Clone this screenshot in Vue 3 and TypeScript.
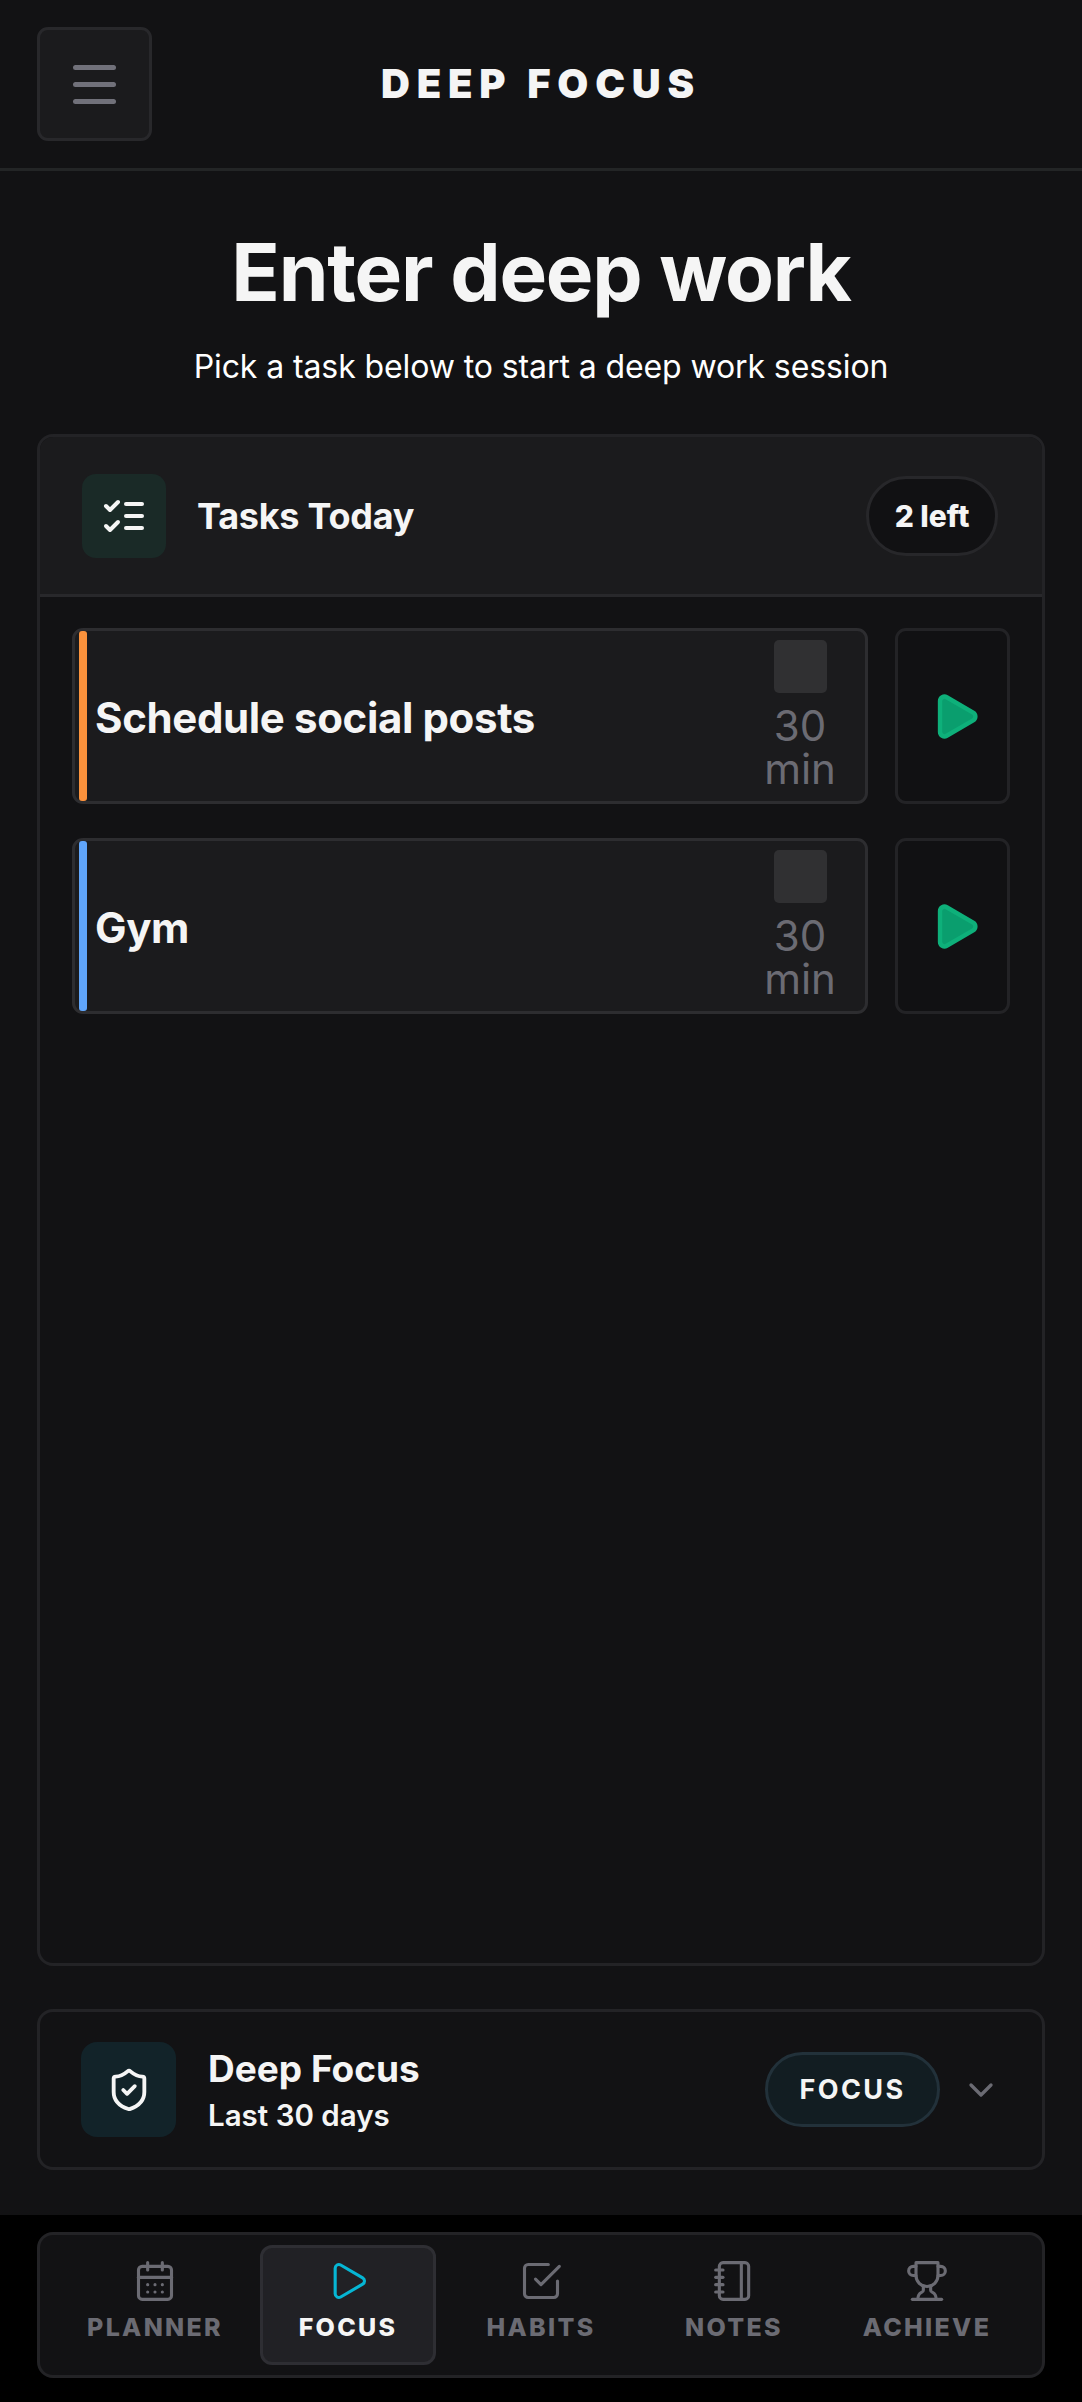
<template>
  <div class="page">
    <header class="topbar">
      <button class="menu-btn" aria-label="Menu">
        <span></span><span></span><span></span>
      </button>
      <div class="brand">DEEP FOCUS</div>
      <div class="spacer"></div>
    </header>

    <main class="content">
      <section class="hero">
        <h1>Enter deep work</h1>
        <p>Pick a task below to start a deep work session</p>
      </section>

      <section class="tasks-card">
        <div class="tasks-head">
          <div class="tasks-icon">
            <svg width="48" height="48" viewBox="0 0 24 24" fill="none" stroke="#f5f5f5" stroke-width="2" stroke-linecap="round" stroke-linejoin="round">
              <path d="m3 17 2 2 4-4" /><path d="m3 7 2 2 4-4" /><path d="M13 6h8" /><path d="M13 12h8" /><path d="M13 18h8" />
            </svg>
          </div>
          <h2>Tasks Today</h2>
          <span class="left-pill">2 left</span>
        </div>
        <div class="task-list">
          <div v-for="task in tasks" :key="task.id" class="task-row">
            <div class="task-box">
              <i class="task-bar" :style="{ background: task.color }"></i>
              <span class="task-name">{{ task.name }}</span>
              <div class="task-meta">
                <i class="task-check"></i>
                <span class="task-time">30 min</span>
              </div>
            </div>
            <button class="play-btn" aria-label="Start">
              <svg width="53" height="53" viewBox="0 0 24 24">
                <path d="M5 5a2 2 0 0 1 3.008-1.728l11.997 6.998a2 2 0 0 1 .003 3.458l-12 7A2 2 0 0 1 5 19z" fill="#0a9e6e" stroke="#0eb07a" stroke-width="2" stroke-linejoin="round" />
              </svg>
            </button>
          </div>
        </div>
      </section>

      <section class="focus-card">
        <div class="focus-icon">
          <svg width="46" height="46" viewBox="0 0 24 24" fill="none" stroke="#f5f5f5" stroke-width="2" stroke-linecap="round" stroke-linejoin="round">
            <path d="M20 13c0 5-3.5 7.5-7.66 8.95a1 1 0 0 1-.67-.01C7.5 20.5 4 18 4 13V6a1 1 0 0 1 1-1c2 0 4.5-1.2 6.24-2.72a1.17 1.17 0 0 1 1.52 0C14.51 3.81 17 5 19 5a1 1 0 0 1 1 1z" />
            <path d="m9 12 2 2 4-4" />
          </svg>
        </div>
        <div class="focus-text">
          <strong>Deep Focus</strong>
          <span>Last 30 days</span>
        </div>
        <span class="focus-pill">FOCUS</span>
        <svg class="chevron" width="40" height="40" viewBox="0 0 24 24" fill="none" stroke="#6b6b73" stroke-width="2" stroke-linecap="round" stroke-linejoin="round">
          <path d="m6 9 6 6 6-6" />
        </svg>
      </section>
    </main>

    <footer class="bottom">
      <nav class="tabbar">
        <div v-for="item in navItems" :key="item.label" class="tab" :class="{ active: item.label === 'FOCUS' }">
          <svg width="44" height="44" viewBox="0 0 24 24" fill="none" stroke="currentColor" stroke-width="1.7" stroke-linecap="round" stroke-linejoin="round">
            <path v-for="d in item.paths" :key="d" :d="d" />
          </svg>
          <span>{{ item.label }}</span>
        </div>
      </nav>
    </footer>
  </div>
</template>

<script setup lang="ts">
interface Task {
  id: number;
  name: string;
  color: string;
}

interface NavItem {
  label: string;
  paths: string[];
}

const tasks: Task[] = [
  { id: 1, name: 'Schedule social posts', color: '#fb923c' },
  { id: 2, name: 'Gym', color: '#60a5fa' }
];

const navItems: NavItem[] = [
  {
    label: 'PLANNER',
    paths: [
      'M8 2v4', 'M16 2v4', 'M5 4h14a2 2 0 0 1 2 2v14a2 2 0 0 1-2 2H5a2 2 0 0 1-2-2V6a2 2 0 0 1 2-2Z', 'M3 10h18',
      'M8 14h.01', 'M12 14h.01', 'M16 14h.01', 'M8 18h.01', 'M12 18h.01', 'M16 18h.01'
    ]
  },
  { label: 'FOCUS', paths: ['M5 5a2 2 0 0 1 3.008-1.728l11.997 6.998a2 2 0 0 1 .003 3.458l-12 7A2 2 0 0 1 5 19z'] },
  {
    label: 'HABITS',
    paths: ['m9 11 3 3L22 4', 'M21 12v7a2 2 0 0 1-2 2H5a2 2 0 0 1-2-2V5a2 2 0 0 1 2-2h11']
  },
  {
    label: 'NOTES',
    paths: [
      'M2 6h4', 'M2 10h4', 'M2 14h4', 'M2 18h4', 'M6 2h12a2 2 0 0 1 2 2v16a2 2 0 0 1-2 2H6a2 2 0 0 1-2-2V4a2 2 0 0 1 2-2Z', 'M16 2v20'
    ]
  },
  {
    label: 'ACHIEVE',
    paths: [
      'M6 9H4.5a2.5 2.5 0 0 1 0-5H6', 'M18 9h1.5a2.5 2.5 0 0 0 0-5H18', 'M4 22h16',
      'M10 14.66V17c0 .55-.47.98-.97 1.21C7.85 18.75 7 20.24 7 22',
      'M14 14.66V17c0 .55.47.98.97 1.21C16.15 18.75 17 20.24 17 22',
      'M18 2H6v7a6 6 0 0 0 12 0V2Z'
    ]
  }
];
</script>

<style>
html,
body {
  margin: 0;
  background: #000;
}
</style>

<style scoped>
.page {
  width: 1082px;
  height: 2402px;
  display: flex;
  flex-direction: column;
  background: #121214;
  color: #f5f5f5;
  font-family: Inter, "Liberation Sans", sans-serif;
}

.topbar {
  box-sizing: border-box;
  height: 171px;
  flex-shrink: 0;
  display: flex;
  align-items: flex-start;
  padding: 27px 37px 0;
  border-bottom: 3px solid #232526;
}

.menu-btn {
  box-sizing: border-box;
  width: 115px;
  height: 114px;
  flex-shrink: 0;
  display: flex;
  flex-direction: column;
  align-items: center;
  justify-content: center;
  gap: 12px;
  padding: 0;
  background: #1b1b1d;
  border: 3px solid #28282b;
  border-radius: 11px;
}

.menu-btn span {
  width: 43px;
  height: 5px;
  border-radius: 3px;
  background: #71717a;
}

.brand {
  flex: 1;
  margin-top: 33px;
  text-align: center;
  font-size: 40px;
  line-height: 48px;
  font-weight: 900;
  letter-spacing: 6.8px;
  color: #f5f5f5;
}

.spacer {
  width: 115px;
  flex-shrink: 0;
}

.content {
  flex: 1;
  min-height: 0;
  display: flex;
  flex-direction: column;
  padding: 0 37px 45px;
}

.hero {
  height: 263px;
  flex-shrink: 0;
  text-align: center;
}

.hero h1 {
  margin: 0;
  padding-top: 54px;
  font-size: 80px;
  line-height: 94px;
  font-weight: 700;
  letter-spacing: -1.2px;
  color: #f5f5f5;
}

.hero p {
  margin: 28px 0 0;
  font-size: 32px;
  line-height: 40px;
  letter-spacing: -0.1px;
  color: #fff;
}

.tasks-card {
  flex: 1;
  min-height: 0;
  display: flex;
  flex-direction: column;
  border: 3px solid #232326;
  border-radius: 16px;
  overflow: hidden;
}

.tasks-head {
  box-sizing: border-box;
  height: 160px;
  flex-shrink: 0;
  display: flex;
  align-items: center;
  padding: 0 44px 0 42px;
  background: #1b1b1d;
  border-bottom: 3px solid #28282b;
}

.tasks-icon {
  width: 84px;
  height: 84px;
  flex-shrink: 0;
  display: flex;
  align-items: center;
  justify-content: center;
  background: #1a2a27;
  border-radius: 14px;
}

.tasks-head h2 {
  flex: 1;
  margin: 0 0 0 31px;
  font-size: 36px;
  line-height: 44px;
  font-weight: 700;
  letter-spacing: -0.25px;
}

.left-pill {
  box-sizing: border-box;
  width: 132px;
  height: 80px;
  display: flex;
  align-items: center;
  justify-content: center;
  background: #111113;
  border: 3px solid #27272a;
  border-radius: 40px;
  font-size: 30px;
  font-weight: 800;
}

.task-list {
  display: flex;
  flex-direction: column;
  gap: 34px;
  padding: 31px 32px 0;
}

.task-row {
  display: flex;
  gap: 27px;
}

.task-box {
  box-sizing: border-box;
  flex: 1;
  height: 176px;
  display: flex;
  align-items: center;
  padding: 0 30px 0 4px;
  background: #1b1b1d;
  border: 3px solid #2d2d30;
  border-radius: 11px;
}

.task-bar {
  width: 8px;
  height: 100%;
  flex-shrink: 0;
  border-radius: 3px;
}

.task-name {
  flex: 1;
  margin: 3px 0 0 8px;
  font-size: 42px;
  line-height: 52px;
  font-weight: 700;
  letter-spacing: -0.37px;
}

.task-meta {
  width: 70px;
  display: flex;
  flex-direction: column;
  align-items: center;
  gap: 11px;
  margin-top: -3px;
}

.task-check {
  width: 53px;
  height: 53px;
  background: #303032;
  border-radius: 5px;
}

.task-time {
  text-align: center;
  font-size: 42px;
  line-height: 43px;
  color: #6b6b73;
}

.play-btn {
  box-sizing: border-box;
  width: 115px;
  height: 176px;
  flex-shrink: 0;
  display: flex;
  align-items: center;
  justify-content: center;
  padding: 0 0 0 5px;
  background: #111113;
  border: 3px solid #232326;
  border-radius: 11px;
}

.focus-card {
  box-sizing: border-box;
  height: 161px;
  flex-shrink: 0;
  display: flex;
  align-items: center;
  margin-top: 43px;
  padding: 0 41px 0 41px;
  border: 3px solid #232326;
  border-radius: 16px;
}

.focus-icon {
  width: 95px;
  height: 95px;
  flex-shrink: 0;
  display: flex;
  align-items: center;
  justify-content: center;
  background: #122329;
  border-radius: 16px;
}

.focus-text {
  flex: 1;
  display: flex;
  flex-direction: column;
  gap: 6px;
  margin-left: 32px;
}

.focus-text strong {
  font-size: 37px;
  line-height: 44px;
  font-weight: 700;
}

.focus-text span {
  font-size: 29.5px;
  line-height: 36px;
  font-weight: 600;
}

.focus-pill {
  box-sizing: border-box;
  width: 175px;
  height: 75px;
  display: flex;
  align-items: center;
  justify-content: center;
  background: #121d22;
  border: 3px solid #22313a;
  border-radius: 38px;
  font-size: 27px;
  font-weight: 700;
  letter-spacing: 2.4px;
}

.chevron {
  margin-left: 21px;
}

.bottom {
  box-sizing: border-box;
  height: 187px;
  flex-shrink: 0;
  padding: 17px 37px 0;
  background: #000;
}

.tabbar {
  box-sizing: border-box;
  height: 146px;
  display: grid;
  grid-template-columns: repeat(5, 176px);
  gap: 17px;
  align-items: stretch;
  padding: 10px 27px;
  background: #121214;
  border: 3px solid #232326;
  border-radius: 16px;
}

.tab {
  box-sizing: border-box;
  display: flex;
  flex-direction: column;
  align-items: center;
  padding-top: 11px;
  gap: 9px;
  color: #6b6b73;
  border: 3px solid transparent;
  border-radius: 12px;
}

.tab.active {
  color: #06b6d4;
  background: #212125;
  border-color: #2e2e33;
}

.tab span {
  font-size: 25px;
  line-height: 30px;
  font-weight: 800;
  letter-spacing: 2.3px;
  color: #6b6b73;
}

.tab.active span {
  color: #f5f5f5;
}
</style>
